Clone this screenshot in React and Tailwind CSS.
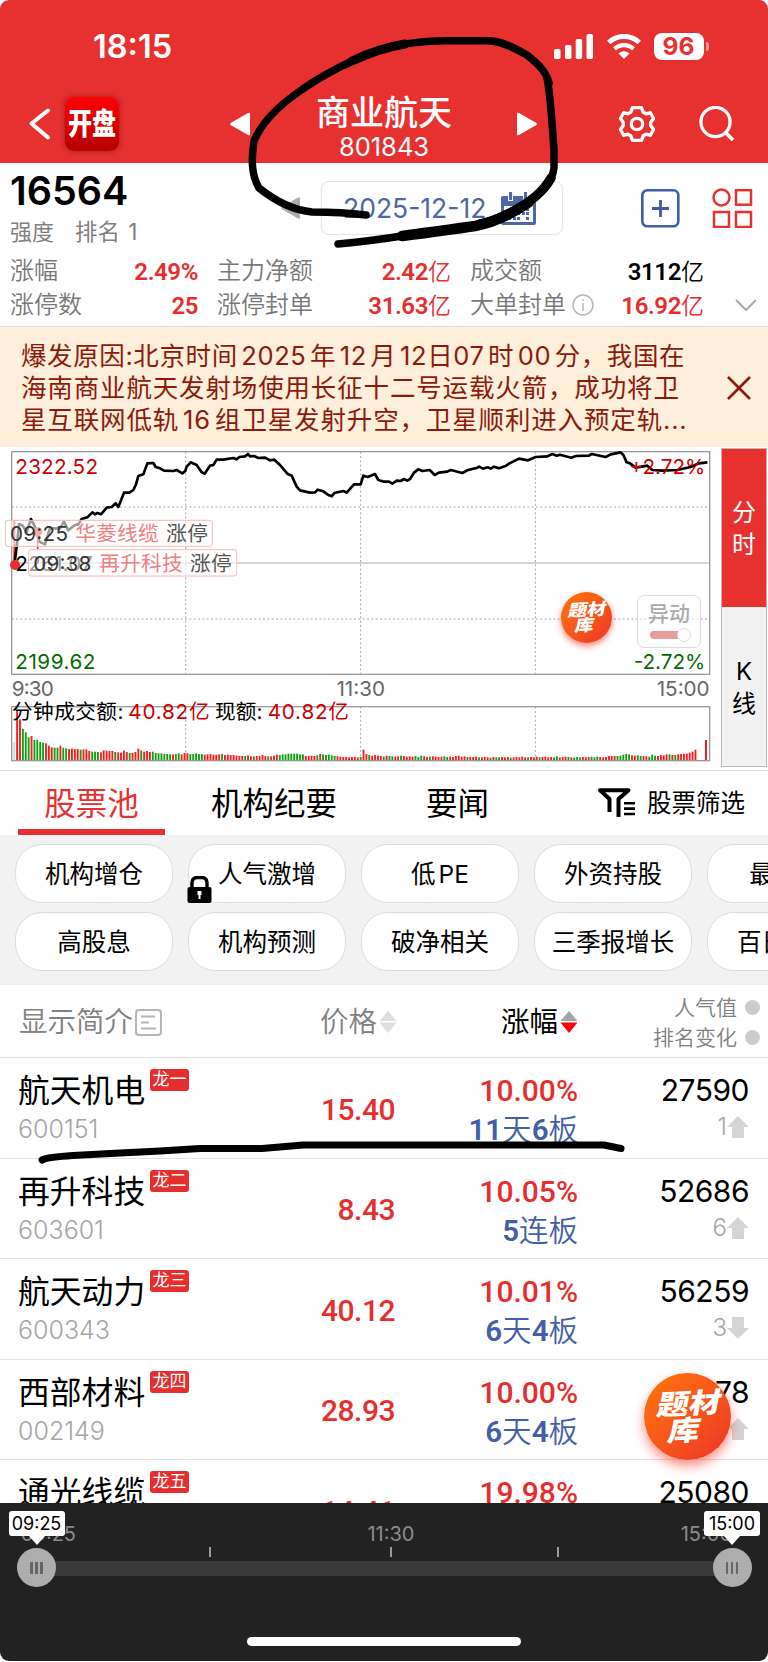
import { clsx } from 'clsx';

const stats = [
  { label: '涨幅', value: '2.49%' },
  { label: '主力净额', value: '2.42', unit: '亿' },
  { label: '成交额', value: '3112', unit: '亿', dark: true },
  { label: '涨停数', value: '25' },
  { label: '涨停封单', value: '31.63', unit: '亿' },
  { label: '大单封单', value: '16.92', unit: '亿', info: true },
];

const filters = [
  ['机构增仓', '人气激增', '低 PE', '外资持股', '最新高'],
  ['高股息', '机构预测', '破净相关', '三季报增长', '百日新高'],
];

const stocks = [
  { name: '航天机电', code: '600151', tag: '龙一', price: '15.40', pct: '10.00%', streak: ['11', '天', '6', '板'], heat: '27590', move: '1', up: true },
  { name: '再升科技', code: '603601', tag: '龙二', price: '8.43', pct: '10.05%', streak: ['5', '连板'], heat: '52686', move: '6', up: true },
  { name: '航天动力', code: '600343', tag: '龙三', price: '40.12', pct: '10.01%', streak: ['6', '天', '4', '板'], heat: '56259', move: '3', up: false },
  { name: '西部材料', code: '002149', tag: '龙四', price: '28.93', pct: '10.00%', streak: ['6', '天', '4', '板'], heat: '34378', move: '2', up: true },
  { name: '通光线缆', code: '300265', tag: '龙五', price: '14.41', pct: '19.98%', streak: ['2', '连板'], heat: '25080', move: '1', up: true },
];

// chart coordinates are in device pixels (3x)
const pricePoints =
  '45,345 48,320 52,290 57,237 68,242 80,262 93,222 105,245 118,290 135,298 150,250 180,250 192,230 205,256 225,240 235,238 245,222 262,217 277,202 285,208 292,204 303,208 320,188 335,186 347,175 355,186 372,143 388,143 400,135 408,118 415,93 430,88 442,55 460,54 467,66 480,70 492,77 520,78 530,75 547,85 556,78 560,65 572,52 590,60 605,82 614,86 630,62 640,60 650,44 670,44 700,39 710,43 718,36 735,34 744,27 750,34 762,33 775,39 795,38 810,46 823,44 840,60 862,86 875,92 890,125 900,136 930,143 945,142 953,134 970,139 985,150 995,154 1003,144 1030,138 1040,143 1062,118 1082,118 1090,92 1103,96 1125,87 1135,105 1152,110 1167,110 1177,116 1190,107 1202,108 1212,102 1222,107 1230,102 1242,83 1255,73 1267,78 1289,75 1304,90 1317,83 1342,80 1352,75 1367,79 1387,84 1402,76 1432,68 1437,65 1449,71 1464,67 1472,71 1482,65 1497,70 1517,63 1527,56 1557,41 1584,46 1607,36 1642,34 1657,27 1670,32 1680,29 1714,38 1727,33 1767,32 1775,27 1817,36 1832,28 1862,22 1870,30 1880,52 1890,55 1907,68 1942,62 1957,75 1987,77 2032,75 2072,66 2097,55 2122,52';

const volumes = [
  150, 122, 93, 83, 68, 72, 60, 61, 54, 52, 50, 43, 38, 37, 37, 43, 37, 35, 33, 34, 33, 33, 31, 32, 32, 27, 25, 25, 24, 23,
  29, 28, 27, 27, 24, 23, 22, 28, 24, 21, 21, 24, 34, 29, 25, 27, 24, 25, 21, 20, 20, 18, 18, 17, 17, 18, 20, 17, 21, 20,
  18, 18, 20, 18, 18, 16, 17, 18, 16, 16, 17, 18, 15, 16, 15, 15, 13, 12, 12, 12, 14, 11, 11, 12, 12, 15, 12, 11, 11, 13,
  16, 15, 17, 17, 19, 19, 19, 19, 17, 17, 12, 12, 13, 12, 14, 18, 17, 15, 16, 14, 12, 11, 10, 9, 9, 8, 9, 9, 8, 9,
  31, 18, 15, 13, 15, 13, 12, 10, 13, 12, 11, 10, 11, 13, 12, 10, 11, 10, 12, 9, 13, 11, 9, 10, 11, 10, 9, 10, 11, 9,
  10, 9, 12, 13, 10, 11, 9, 9, 9, 10, 8, 8, 9, 8, 7, 9, 8, 8, 9, 8, 9, 7, 8, 9, 8, 10, 8, 8, 9, 8,
  10, 8, 9, 10, 8, 9, 8, 11, 8, 9, 10, 9, 8, 7, 9, 8, 9, 8, 9, 10, 8, 10, 9, 8, 9, 12, 12, 12, 12, 13,
  16, 18, 17, 14, 13, 14, 12, 12, 11, 10, 16, 13, 12, 15, 14, 17, 17, 15, 15, 17, 18, 19, 19, 22, 25, 31,
];
const volumeColors =
  'rrgggrggggrrrggrggrrrrgrrrgggrrrrrgrrrrgrrrgrrrgggggggrggrrrgggggrrrrrrgrrrrrrrgrrgrrrrgrrrgggggggggrrrrgrgggggrrrrrrrrgrrgrrrrgrggrrgrrrrgggrrgrrrrggrrrrrrgrrrgrrrgrggrrrgrrrrrgrrrgrrrrggrrrgrgggrrrgggrrrrrrgggggrrggrrgggrrrrgrgrrrrrr';

function Triangle({ className, flip }) {
  return (
    <svg className={className} viewBox="0 0 20 24" fill="currentColor">
      <path d={flip ? 'M20 2v20q0 2-2 1L1 13.3q-1.6-1.3 0-2.6L18 1q2-1 2 1z' : 'M0 2v20q0 2 2 1l17-9.7q1.6-1.3 0-2.6L2 1Q0 0 0 2z'} />
    </svg>
  );
}

function StatusBar() {
  return (
    <div className="flex h-[86px] items-center pt-[7px] pl-[93px] pr-[59px] text-white">
      <span className="pt-[2px] text-[32.5px] font-semibold leading-none">18:15</span>
      <svg className="ml-auto h-[25px] w-[39px]" viewBox="0 0 39 25" fill="currentColor">
        <rect x="0" y="15" width="6.5" height="10" rx="1.8" />
        <rect x="11" y="11" width="6.5" height="14" rx="1.8" />
        <rect x="21.7" y="5" width="6.5" height="20" rx="1.8" />
        <rect x="32.5" y="0" width="6.5" height="25" rx="1.8" />
      </svg>
      <svg className="ml-[14px] h-[25px] w-[34px]" viewBox="0 0 34 25">
        <path d="M1.8 8.5a22 22 0 0 1 30.4 0" fill="none" stroke="currentColor" strokeWidth="5" />
        <path d="M7.5 14.8a14 14 0 0 1 19 0" fill="none" stroke="currentColor" strokeWidth="4.4" />
        <path d="M11.5 19.5a8 8 0 0 1 11 0L17 25z" fill="currentColor" />
      </svg>
      <div className="ml-[13px] flex h-[27px] w-[50px] items-center justify-center rounded-[8px] bg-white text-[24.5px] font-bold leading-none text-[#e73131]">
        96
      </div>
      <div className="ml-[2px] h-[9px] w-[3.5px] rounded-r-full bg-white/50" />
    </div>
  );
}

function Header() {
  return (
    <header className="h-[163px] bg-[#e73131] text-white">
      <StatusBar />
      <div className="flex h-[77px] pl-[28px]">
        <svg className="mt-[21px] h-[34px] w-[23px]" viewBox="0 0 23 34" fill="none" stroke="currentColor" strokeWidth="4" strokeLinecap="round" strokeLinejoin="round">
          <path d="M20 3.5 3.5 16.5 20 30.5" />
        </svg>
        <div className="ml-[14px] mt-[11px] flex h-[54px] w-[54px] items-center justify-center rounded-[9px] bg-linear-to-b from-[#ff0000] to-[#b50000] shadow-[0_0_7px_rgba(90,0,0,0.5)]">
          <span className="inline-block scale-y-[1.24] text-[24px] font-black leading-none">开盘</span>
        </div>
        <Triangle flip className="ml-[111px] mt-[26px] h-[24px] w-[20px]" />
        <div className="mt-[10px] ml-[57px] flex w-[154px] flex-col items-center">
          <h1 className="text-[34px] font-medium leading-[34px]">商业航天</h1>
          <span className="mt-[4px] text-[25.5px] leading-[25px]">801843</span>
        </div>
        <Triangle className="ml-[56px] mt-[26px] h-[24px] w-[20px]" />
        <svg className="ml-[81px] mt-[19px] h-[38px] w-[38px]" viewBox="-19 -19 38 38" fill="none" stroke="currentColor" strokeWidth="3.3" strokeLinejoin="round">
          <path d="M-4.5-16.3h9l1.7 4.5 3 1.6 4.2-1.1 3.2 5.8-2.9 4v3l2.9 4-3.2 5.8-4.2-1.1-3 1.6-1.7 4.5h-9l-1.7-4.5-3-1.6-4.2 1.1-3.2-5.8 2.9-4v-3l-2.9-4 3.2-5.8 4.2 1.1 3-1.6z" />
          <circle r="5.7" />
        </svg>
        <svg className="ml-[43px] mt-[20px] h-[36px] w-[36px]" viewBox="0 0 36 36" fill="none" stroke="currentColor" strokeWidth="3.3">
          <circle cx="16.5" cy="16" r="14.6" />
          <path d="m26 26 8 8" strokeWidth="3.8" />
        </svg>
      </div>
    </header>
  );
}

function Summary() {
  return (
    <section className="h-[164px] border-b border-[#dcdcdc]">
      <div className="flex h-[91px] pl-[10px]">
        <div className="w-[271px] pt-[9px]">
          <div className="text-[39.5px] font-semibold leading-[38px]">16564</div>
          <div className="mt-[10px] flex gap-[21px] text-[22px] leading-[24px] text-[#808080]">
            <span>强度</span>
            <span className="text-[22.5px] [word-spacing:2px]">排名 1</span>
          </div>
        </div>
        <Triangle flip className="mt-[33px] h-[24px] w-[19px] text-[#adadad]" />
        <div className="ml-[21px] mt-[18px] flex h-[54px] w-[242px] items-center rounded-[8px] border border-[#e4e4e4] pl-[21px] text-[#5067a5]">
          <span className="w-[158px] text-[26.5px] leading-none">2025-12-12</span>
          <svg className="h-[33px] w-[35px]" viewBox="0 0 35 33" fill="currentColor">
            <path fillRule="evenodd" d="M2 4h31q2 0 2 2v25q0 2-2 2H2q-2 0-2-2V6q0-2 2-2zm1 10v16h29V14z" />
            <path d="M7 0h5v9H7zM22 0h5v9h-5z" fill="#fff" />
            <path d="M8 0h3v8H8zM23 0h3v8h-3z" />
            <path d="M16 16h3v3h-3zM21 16h3v3h-3zM25 16h3v3h-3zM7 20h3v3H7zM12 20h3v3h-3zM16 20h3v3h-3zM21 20h3v3h-3zM25 20h3v3h-3zM7 25h3v3H7zM12 25h3v3h-3zM16 25h3v3h-3zM25 25h3v3h-3z" />
          </svg>
        </div>
        <svg className="ml-[78px] mt-[26px] h-[39px] w-[39px]" viewBox="0 0 39 39" fill="none" stroke="#3d5da7" strokeWidth="2.6">
          <rect x="1.3" y="1.3" width="36" height="36" rx="5" />
          <path d="M11 19.5h17M19.5 11v17" strokeWidth="2.8" />
        </svg>
        <svg className="ml-[32px] mt-[25px] h-[40px] w-[41px]" viewBox="0 0 41 40" fill="none" stroke="#e73131" strokeWidth="2.5">
          <circle cx="9.5" cy="9.5" r="8" />
          <rect x="24" y="2.2" width="15" height="14.5" />
          <rect x="2" y="24" width="15" height="15" />
          <rect x="24" y="24" width="15" height="15" />
        </svg>
      </div>
      <div className="flex">
        <div className="grid grid-cols-[188px_234px_234px] gap-x-[19px] pl-[10px]">
          {stats.map((s) => (
            <div key={s.label} className="flex h-[34px] items-center">
              <span className="text-[24px] font-[350] leading-none text-[#777]">{s.label}</span>
              {s.info && (
                <svg className="ml-[6px] h-[22px] w-[22px]" viewBox="0 0 22 22" fill="none" stroke="#b5b5b5" strokeWidth="1.5">
                  <circle cx="11" cy="11" r="10" />
                  <path d="M11 9v8M11 5v2" />
                </svg>
              )}
              <span className={clsx('ml-auto pt-px text-[24px] leading-none font-["Roboto","Noto_Sans_CJK_SC",sans-serif]', s.dark ? 'text-black' : 'text-[#e62e2e]')}>
                <span className="font-semibold tracking-[-0.4px]">{s.value}</span>
                {s.unit && <span className="text-[23px] font-[350]">{s.unit}</span>}
              </span>
            </div>
          ))}
        </div>
        <svg className="ml-[31px] mt-[45px] h-[13px] w-[22px] shrink-0" viewBox="0 0 22 13" fill="none" stroke="#aaa" strokeWidth="2">
          <path d="m1 1 10 10L21 1" />
        </svg>
      </div>
    </section>
  );
}

function Notice() {
  return (
    <section className="flex h-[120px] items-center bg-[#fdefd9] pl-[21px] pt-px text-[#8b1a0e]">
      <p className="w-[706px] whitespace-pre text-[25.5px] leading-[32px] tracking-[0.85px]">
        <span className="block tracking-[0.6px] [word-spacing:-4.2px]">爆发原因:北京时间 2025 年 12 月 12日07 时 00 分，我国在</span>
        <span className="block">海南商业航天发射场使用长征十二号运载火箭，成功将卫</span>
        <span className="block [word-spacing:-4px]">星互联网低轨 16 组卫星发射升空，卫星顺利进入预定轨...</span>
      </p>
      <svg className="h-[24px] w-[24px]" viewBox="0 0 24 24" stroke="currentColor" strokeWidth="2.6">
        <path d="m1 1 22 22M23 1 1 23" />
      </svg>
    </section>
  );
}

function ThemeButton({ className, textClassName }) {
  return (
    <div className={clsx('flex items-center justify-center rounded-full bg-linear-to-br from-[#ff7500] to-[#ec3226] text-center text-white', className)}>
      <div className={clsx('-skew-x-12 -rotate-3 scale-y-[0.86] font-black', textClassName)}>
        题材
        <br />库
      </div>
    </div>
  );
}

function Chart() {
  return (
    <section className="relative flex h-[324px] border-b border-[#d5d5d5]">
      <svg className="h-[323px] w-[720px] shrink-0" viewBox="0 6 2160 969" fill="none">
        <g stroke="#a6a6a6" strokeWidth="3" strokeDasharray="6 7">
          <path d="M35 186H2129M35 522H2129M557 20V688M1082 20V688M1606 20V688M557 785V946M1082 785V946M1606 785V946" />
        </g>
        <path d="M35 354H2129" stroke="#aaa" strokeWidth="3" />
        <rect x="35" y="20" width="2094" height="668" stroke="#999" strokeWidth="4" />
        <rect x="35" y="785" width="2094" height="162" stroke="#999" strokeWidth="4" />
        <path d="M43 225V350" stroke="#e62e2e" strokeWidth="6" />
        <polyline points={pricePoints} stroke="#000" strokeWidth="8" strokeLinejoin="round" />
        <circle cx="45" cy="360" r="15" fill="#e62e2e" />
        <circle cx="113" cy="260" r="14" fill="#e62e2e" />
        <path d="M113 260v52" stroke="#e62e2e" strokeWidth="5" />
        <rect x="39" y="891" width="6" height="54" fill="#ddd" />
        {volumes.map((v, i) => (
          <rect key={i} x={48.5 + i * 8.66} y={945 - v} width="5.6" height={v} fill={volumeColors[i] === 'g' ? '#12a012' : '#f51d1d'} />
        ))}
        <rect x="2115" y="885" width="6" height="60" fill="#f51d1d" />
        <g fontSize="62" fontFamily="Inter, 'Noto Sans CJK SC', sans-serif">
          <text x="46" y="86" fill="#cc0000" textLength="248">2322.52</text>
          <text x="46" y="672" fill="#046b04" textLength="240">2199.62</text>
          <text x="46" y="378" fill="#000" textLength="232">2261.07</text>
          <text x="2116" y="86" fill="#cc0000" textAnchor="end">+2.72%</text>
          <text x="2116" y="672" fill="#046b04" textAnchor="end">-2.72%</text>
          <text x="35" y="754" fill="#666" textLength="126">9:30</text>
          <text x="1082" y="754" fill="#666" textAnchor="middle">11:30</text>
          <text x="2129" y="754" fill="#666" textAnchor="end">15:00</text>
          <text x="36" y="822" fill="#000" textLength="334">分钟成交额:</text>
          <text x="385" y="822" fill="#cc0000" textLength="244">40.82亿</text>
          <text x="645" y="822" fill="#000" textLength="142">现额:</text>
          <text x="803" y="822" fill="#cc0000" textLength="244">40.82亿</text>
        </g>
        {/* limit-up event tags */}
        <g fontSize="62" fontFamily="Inter, 'Noto Sans CJK SC', sans-serif">
          <rect x="16" y="226" width="621" height="78" rx="8" fill="#fff" fillOpacity="0.6" stroke="#f8b9b9" strokeWidth="3" />
          <text x="30" y="289" fill="#333" textLength="174">09:25</text>
          <text x="226" y="289" fill="#ee8080" textLength="250">华菱线缆</text>
          <text x="499" y="289" fill="#555" textLength="125">涨停</text>
          <rect x="86" y="314" width="624" height="79" rx="8" fill="#fff" fillOpacity="0.6" stroke="#f8b9b9" strokeWidth="3" />
          <text x="100" y="377" fill="#333" textLength="174">09:38</text>
          <text x="298" y="377" fill="#ee8080" textLength="250">再升科技</text>
          <text x="570" y="377" fill="#555" textLength="125">涨停</text>
        </g>
      </svg>
      <ThemeButton
        className="absolute left-[561px] top-[145px] h-[51px] w-[51px] shadow-[0_3px_6px_rgba(245,50,30,0.6)]"
        textClassName="text-[19px] leading-[18px]"
      />
      <div className="absolute left-[637px] top-[148px] flex h-[53px] w-[64px] flex-col items-center rounded-[7px] border-[1.5px] border-[#dcdcdc] bg-white/60 pt-[6px]">
        <span className="text-[21px] font-medium leading-[24px] text-[#aaa]">异动</span>
        <div className="mt-[5px] h-[8px] w-[38px] rounded-full bg-[#e99c9c]" />
        <div className="absolute left-[39px] top-[32px] h-[14px] w-[14px] rounded-full border-[1.5px] border-[#ddd] bg-white" />
      </div>
      <div className="ml-[1px] mt-px flex h-[319px] w-[46px] flex-col border border-[#b9b9b9] text-center text-[24px] leading-[32px]">
        <div className="flex h-[158px] flex-col justify-center bg-[#e73131] pt-[2px] text-white">
          <span>分</span>
          <span>时</span>
        </div>
        <div className="flex flex-1 flex-col justify-center bg-[#f2f2f2] pt-[3px]">
          <span>K</span>
          <span>线</span>
        </div>
      </div>
    </section>
  );
}

function Tabs() {
  return (
    <nav className="flex h-[64px] text-[31.5px] leading-none">
      <div className="ml-[18px] flex w-[147px] items-center justify-center border-b-[6px] border-[#e73131] pt-[7px] text-[#e73131]">股票池</div>
      <div className="ml-[46px] flex items-center pt-px">机构纪要</div>
      <div className="ml-[89px] flex items-center pt-px">要闻</div>
      <div className="ml-auto flex items-center pr-[23px] text-[24.5px]">
        <svg className="mr-[11px] h-[30px] w-[39px]" viewBox="0 0 39 30" fill="none" stroke="#000" strokeWidth="4">
          <path d="M12.5 24V11L3 2.2h28.5L21.5 11v18" strokeLinejoin="round" />
          <path d="M27 15.2h11M27 20.6h11M27 26h11" strokeWidth="2.6" />
        </svg>
        股票筛选
      </div>
    </nav>
  );
}

function Filters() {
  return (
    <section className="flex h-[150px] flex-col gap-[9px] overflow-hidden bg-[#f2f2f2] pl-[15px] pt-[9px]">
      {filters.map((row, r) => (
        <div key={r} className="flex gap-[15px]">
          {row.map((label) => (
            <div
              key={label}
              className="relative flex h-[59px] w-[158px] shrink-0 items-center justify-center rounded-[27px] border border-[#dcdcdc] bg-white pt-px text-[24.5px] leading-none [word-spacing:-4px]"
            >
              {label}
              {label === '人气激增' && (
                <svg className="absolute -left-[2px] bottom-[-1px] h-[27px] w-[25px]" viewBox="0 0 25 27">
                  <path d="M5 12V7q0-5 5-5.5h5q5 .5 5 5.5v5" fill="none" stroke="#000" strokeWidth="3.4" />
                  <rect x="0.5" y="11" width="24" height="16" rx="2" />
                  <path d="M10.5 15h4v4h-1v4h-2v-4h-1z" fill="#fff" />
                </svg>
              )}
            </div>
          ))}
        </div>
      ))}
    </section>
  );
}

function SortArrows({ active }) {
  return (
    <svg className="ml-[2px] h-[22px] w-[18px]" viewBox="0 0 18 22">
      <path d="m9 0 8.5 10H.5z" fill={active ? '#a5a5a5' : '#dedede'} />
      <path d="m9 22 8.5-10.5H.5z" fill={active ? '#ff0000' : '#dedede'} />
    </svg>
  );
}

const rowGrid = 'grid grid-cols-[220px_157px_183px_171px] pl-[18px]';

function StockList() {
  return (
    <section className="h-[518px] overflow-hidden">
      <div className={clsx(rowGrid, 'h-[73px] border-b border-[#dedede] pt-[2px] text-[28.5px] leading-none text-[#808080]')}>
        <div className="flex items-center whitespace-nowrap pl-[1px] font-[350]">
          显示简介
          <svg className="ml-[2px] h-[27px] w-[27px]" viewBox="0 0 27 27" fill="none" stroke="#b5b5b5" strokeWidth="2">
            <rect x="1" y="1" width="25" height="25" rx="3" />
            <path d="M6 7.5h14M6 13.5h8M6 19.5h15" />
          </svg>
        </div>
        <div className="-mr-[2px] flex items-center justify-end font-[350]">
          价格
          <SortArrows />
        </div>
        <div className="flex items-center justify-end text-black">
          涨幅
          <SortArrows active />
        </div>
        <div className="-mr-[11px] flex flex-col justify-center text-[21px] font-[350]">
          <div className="flex h-[30px] items-center justify-end gap-[8px]">
            人气值 <i className="h-[15px] w-[15px] rounded-full bg-[#ccc]" />
          </div>
          <div className="flex h-[30px] items-center justify-end gap-[8px]">
            排名变化 <i className="h-[15px] w-[15px] rounded-full bg-[#ccc]" />
          </div>
        </div>
      </div>
      {stocks.map((s) => (
        <div key={s.code} className={clsx(rowGrid, 'h-[100.5px] border-b border-[#e2e2e2]')}>
          <div className="pt-[14px]">
            <div className="flex">
              <span className="w-[126px] whitespace-nowrap text-[31.8px] leading-[38px]">{s.name}</span>
              <span className="-mt-[3px] ml-[6px] flex h-[22px] w-[39px] items-center justify-center rounded-[3px] bg-[#e62e2e] pb-px text-[17px] leading-none text-white">
                {s.tag}
              </span>
            </div>
            <div className="mt-[6px] text-[25px] font-[350] leading-[26px] text-[#a5a5a5]">{s.code}</div>
          </div>
          <div className="flex items-center justify-end pt-[4px] font-['Roboto',sans-serif] text-[30px] font-medium leading-none tracking-[-0.5px] text-[#e62e2e]">
            {s.price}
          </div>
          <div className="flex flex-col items-end pt-[14px] font-['Roboto','Noto_Sans_CJK_SC',sans-serif]">
            <span className="text-[30px] font-medium leading-[38px] text-[#e62e2e]">{s.pct}</span>
            <span className="text-[29.5px] leading-[40px] text-[#445fa8]">
              {s.streak.map((t, i) => (
                <span key={i} className={/\d/.test(t) ? 'font-semibold' : 'font-[350]'}>{t}</span>
              ))}
            </span>
          </div>
          <div className="flex flex-col items-end pt-[13px]">
            <span className="text-[30px] leading-[38px] tracking-[-0.5px]">{s.heat}</span>
            <span className="flex items-center text-[24px] font-[350] leading-[36px] text-[#a5a5a5]">
              {s.move}
              <svg className={clsx('h-[22px] w-[22px]', !s.up && 'rotate-180')} viewBox="0 0 22 22" fill="#d4d4d4">
                <path d="M11 0 22 11h-5v11H5V11H0z" />
              </svg>
            </span>
          </div>
        </div>
      ))}
    </section>
  );
}

function Handle({ label, className }) {
  return (
    <div className={clsx('absolute top-[8px] flex w-[56px] flex-col items-center', className)}>
      <div className="flex h-[25px] w-full items-center justify-center rounded-[3px] bg-white text-[18px] leading-none text-black">{label}</div>
      <svg className="h-[9px] w-[16px]" viewBox="0 0 16 9" fill="#fff">
        <path d="M0 0h16L8 9z" />
      </svg>
      <div className="mt-[3px] flex h-[39px] w-[39px] items-center justify-center gap-[2.5px] rounded-full bg-[#adadad]">
        <i className="h-[12px] w-[2.5px] bg-[#666]" />
        <i className="h-[12px] w-[2.5px] bg-[#666]" />
        <i className="h-[12px] w-[2.5px] bg-[#666]" />
      </div>
    </div>
  );
}

function TimeSlider() {
  return (
    <footer className="relative h-[158px] rounded-b-[9px] bg-[#222] pt-[21px]">
      <div className="flex h-[20px] text-[20px] leading-none text-[#8c8c8c]">
        <span className="w-[76px] text-right">09:25</span>
        <span className="ml-[265px] w-[100px] text-center">11:30</span>
        <span className="w-[291px] text-right">15:00</span>
      </div>
      <div className="mt-[3px] flex h-[10px] pl-[209px]">
        <i className="mr-[179px] h-full w-[2px] bg-[#999]" />
        <i className="mr-[165px] h-full w-[2px] bg-[#999]" />
        <i className="h-full w-[2px] bg-[#999]" />
      </div>
      <div className="ml-[36px] mt-[4px] h-[15px] w-[696px] bg-[#3a3a3a]" />
      <Handle label="09:25" className="left-[8.5px]" />
      <Handle label="15:00" className="left-[704px]" />
      <div className="mx-auto mt-[61px] h-[9px] w-[274px] rounded-full bg-white" />
    </footer>
  );
}

// hand-drawn ink over the page
function Ink() {
  return (
    <svg className="pointer-events-none absolute left-0 top-0 h-[1662px] w-[768px]" viewBox="0 0 768 1662" fill="none" stroke="#000" strokeWidth="7.5" strokeLinecap="round" strokeLinejoin="round">
      <path d="M366 215C350 213 330 212 312 212C292 210 274 200 259 188C250 173 252 155 254 141C262 122 281 104 300 91C322 75 345 64 366 54.5" />
      <path d="M345 65Q366 54 386 48.5C404 43 425 41 447 40.8H488C503 41 518 50 527 55C538 64 546 71 549 83" />
      <path d="M352 61Q380 48 405 44" strokeWidth="9" />
      <path d="M547 78C551 98 552 125 554 150V168C552 182 544 190 534 198" />
      <path d="M551 178C541 196 524 206 510 213C500 218 491 222 480 224" strokeWidth="9.5" />
      <path d="M528 203C510 215 492 223 475 226C448 230 425 233 402 236" strokeWidth="10.5" />
      <path d="M440 230.5C410 234 385 240 338 244" />
      <path d="M42 1160Q48 1157 73 1155.5L120 1153L160 1151L200 1148.5H262L303 1145H604L621 1148.5" strokeWidth="7" />
    </svg>
  );
}

export default function App() {
  return (
    <div className="relative h-[1662px] w-[768px] overflow-hidden bg-white text-black font-['Inter','Noto_Sans_CJK_SC',sans-serif]">
      <div className="overflow-hidden rounded-t-[9px]">
        <Header />
      </div>
      <Summary />
      <Notice />
      <Chart />
      <Tabs />
      <Filters />
      <StockList />
      <TimeSlider />
      <ThemeButton
        className="absolute left-[644px] top-[1373px] h-[87px] w-[87px] shadow-[0_6px_12px_rgba(245,50,30,0.55)]"
        textClassName="text-[32px] leading-[31px]"
      />
      <Ink />
    </div>
  );
}
